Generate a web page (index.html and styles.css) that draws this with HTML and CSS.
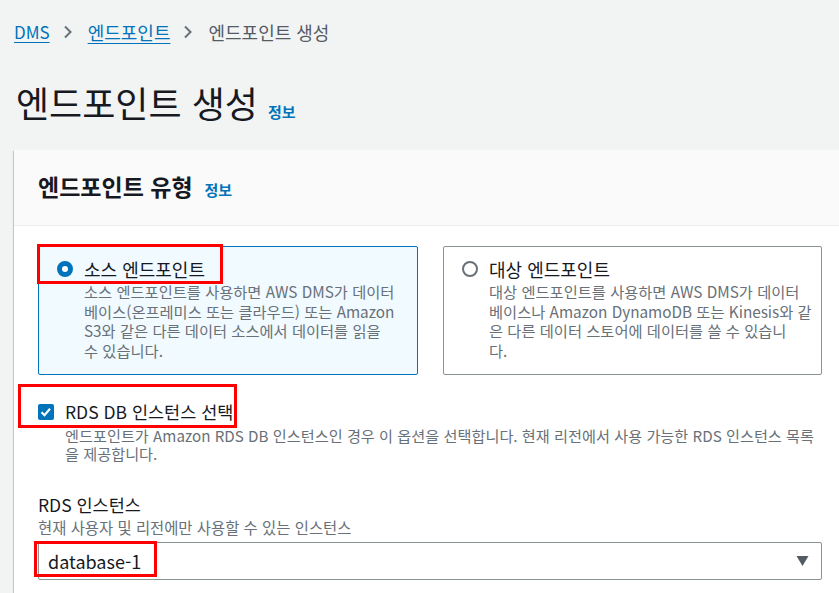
FILE: index.html
```html
<!DOCTYPE html>
<html lang="ko">
<head>
<meta charset="utf-8">
<link rel="stylesheet" href="styles.css">
</head>
<body>
<div class="page">
  <nav class="crumbs">
    <a class="crumb-link">DMS</a>
    <svg class="chev" viewBox="0 0 10 14"><path d="M2 1.5l5.5 5.5L2 12.5"/></svg>
    <a class="crumb-link">엔드포인트</a>
    <svg class="chev" viewBox="0 0 10 14"><path d="M2 1.5l5.5 5.5L2 12.5"/></svg>
    <span class="crumb-current">엔드포인트 생성</span>
  </nav>
  <h1 class="title">엔드포인트 생성<a class="info">정보</a></h1>

  <section class="card">
    <header class="card-head">
      <h2 class="card-title">엔드포인트 유형<a class="info">정보</a></h2>
    </header>
    <div class="card-body">
      <div class="tiles">
        <div class="tile selected">
          <div class="tile-row">
            <span class="radio on"></span>
            <div class="tile-text">
              <div class="tile-label">소스 엔드포인트</div>
              <div class="tile-desc">소스 엔드포인트를 사용하면 AWS DMS가 데이터<br>베이스(온프레미스 또는 클라우드) 또는 Amazon<br>S3와 같은 다른 데이터 소스에서 데이터를 읽을<br>수 있습니다.</div>
            </div>
          </div>
          <span class="mark mark-tile"></span>
        </div>
        <div class="tile">
          <div class="tile-row">
            <span class="radio"></span>
            <div class="tile-text">
              <div class="tile-label">대상 엔드포인트</div>
              <div class="tile-desc">대상 엔드포인트를 사용하면 AWS DMS가 데이터<br>베이스나 Amazon DynamoDB 또는 Kinesis와 같<br>은 다른 데이터 스토어에 데이터를 쓸 수 있습니<br>다.</div>
            </div>
          </div>
        </div>
      </div>

      <div class="check">
        <span class="checkbox">
          <svg viewBox="0 0 16 16"><path d="M3.5 8.2l3 3 5.5-6.5"/></svg>
        </span>
        <div class="check-text">
          <div class="check-label">RDS DB 인스턴스 선택</div>
          <div class="check-desc">엔드포인트가 Amazon RDS DB 인스턴스인 경우 이 옵션을 선택합니다. 현재 리전에서 사용 가능한 RDS 인스턴스 목록<br>을 제공합니다.</div>
        </div>
        <span class="mark mark-check"></span>
      </div>

      <div class="field">
        <div class="field-label">RDS 인스턴스</div>
        <div class="field-desc">현재 사용자 및 리전에만 사용할 수 있는 인스턴스</div>
        <div class="select">
          <span class="select-value">database-1</span>
          <svg class="caret" viewBox="0 0 12 10"><path d="M0 0h12L6 10z"/></svg>
          <span class="mark mark-select"></span>
        </div>
      </div>
    </div>
  </section>
</div>
</body>
</html>
```

FILE: styles.css
```css
* { box-sizing: border-box; }
html, body { margin: 0; padding: 0; }
body {
  background: #f2f3f3;
  font-family: "Noto Sans CJK KR", "Noto Sans", sans-serif;
  color: #16191f;
  width: 839px;
  height: 593px;
  overflow: hidden;
}
.page {
  width: 839px;
  height: 593px;
  overflow: hidden;
  padding: 20px 0 0 14px;
}

.crumbs {
  display: flex;
  align-items: center;
  height: 24px;
  font-size: 18px;
  line-height: 24px;
}
.crumb-link {
  color: #0073bb;
  text-decoration: underline;
  text-decoration-thickness: 1px;
  text-underline-offset: 3px;
}
.crumb-link:first-child { font-size: 17px; }
.crumb-current { color: #545b64; }
.chev {
  width: 10px; height: 14px;
  margin: 0 15px 0 13px;
  fill: none; stroke: #687078; stroke-width: 2;
}

.title {
  margin: 36px 0 0 2px;
  height: 70px;
  font-size: 36px;
  font-weight: 400;
  line-height: 44px;
}
.info {
  font-size: 15px;
  font-weight: 700;
  color: #0073bb;
  margin-left: 10px;
}

.card {
  width: 832px;
  background: #fff;
  box-shadow: 0 1px 1px 0 rgba(0,28,36,.3), 1px 1px 1px 0 rgba(0,28,36,.15), -1px 1px 1px 0 rgba(0,28,36,.15);
}
.card-head {
  height: 76px;
  background: #fafafa;
  border-bottom: 1px solid #eaeded;
  padding: 0 24px;
  display: flex;
  align-items: center;
}
.card-title {
  margin: 0;
  font-size: 23px;
  font-weight: 700;
  line-height: 30px;
}
.card-title .info { margin-left: 12px; }

.card-body { padding: 20px 24px 20px; }

.tiles {
  display: grid;
  grid-template-columns: 380px 379px;
  column-gap: 25px;
}
.tile {
  position: relative;
  height: 129px;
  border: 1px solid #879596;
  border-radius: 2px;
  padding: 9px 12px 9px 18px;
}
.tile.selected {
  background: #f1faff;
  border-color: #0073bb;
}
.tile-row { display: flex; gap: 11px; }
.radio {
  flex: none;
  width: 16px; height: 16px;
  margin-top: 5px;
  border-radius: 50%;
  border: 2px solid #687078;
  background: #fff;
}
.radio.on {
  border: 5px solid #0073bb;
}
.tile-label { font-size: 18px; line-height: 26px; }
.tile-desc {
  font-size: 15.3px;
  line-height: 19.5px;
  color: #687078;
  white-space: nowrap;
}

.check {
  position: relative;
  display: flex;
  gap: 11px;
  margin-top: 26px;
}
.checkbox {
  flex: none;
  width: 16px; height: 16px;
  margin-top: 3px;
  border-radius: 2px;
  background: #0073bb;
  display: flex;
}
.checkbox svg {
  width: 16px; height: 16px;
  fill: none; stroke: #fff; stroke-width: 2.2;
}
.check-text { flex: 1; }
.check-label { font-size: 17.5px; line-height: 22px; }
.check-desc {
  margin-top: 3px;
  font-size: 15.2px;
  line-height: 18px;
  color: #687078;
  white-space: nowrap;
}

.field { margin-top: 32px; }
.field-label { font-size: 17.5px; line-height: 22px; }
.field-desc {
  font-size: 15.4px;
  line-height: 22px;
  color: #687078;
}
.select {
  position: relative;
  margin-top: 4px;
  height: 38px;
  border: 1px solid #879596;
  border-radius: 2px;
  display: flex;
  align-items: center;
  justify-content: space-between;
  padding: 0 12px 0 9px;
  background: #fff;
}
.select-value { font-size: 18px; }
.caret { width: 13px; height: 10px; fill: #545b64; }

.mark {
  position: absolute;
  border: 3px solid #ff0000;
  pointer-events: none;
}
.mark-tile { left: -2px; top: -3px; width: 186px; height: 40px; }
.mark-check { left: -20px; top: -17px; width: 219px; height: 44px; }
.mark-select { left: -5px; top: -2px; width: 123px; height: 36px; }
```
